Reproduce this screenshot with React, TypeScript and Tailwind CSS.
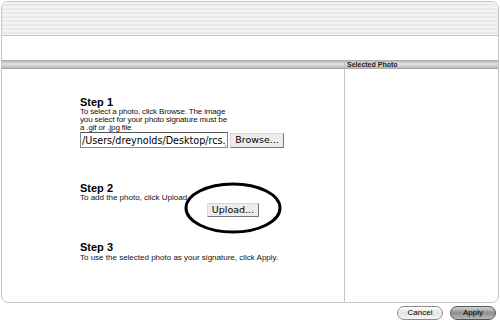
import React from 'react';

const stripes =
  'bg-[repeating-linear-gradient(to_bottom,#f3f3f3_0px,#f3f3f3_2px,#e9e9e9_2px,#e9e9e9_4px)]';

function Bar({ children, className = '' }: { children?: React.ReactNode; className?: string }) {
  return (
    <div
      className={`h-[9px] bg-[linear-gradient(to_bottom,#a9a9a9_0%,#c9c9c9_25%,#e4e4e4_45%,#cfcfcf_65%,#bdbdbd_85%,#9c9c9c_100%)] ${className}`}
    >
      {children}
    </div>
  );
}

function Title({ children }: { children: React.ReactNode }) {
  return <h3 className="text-[11px] leading-[12px] font-bold text-black">{children}</h3>;
}

const lucida = { fontFamily: '"DejaVu Sans", Verdana, sans-serif' };

export default function App() {
  return (
    <div
      className="relative w-[500px] h-[322px] bg-white overflow-hidden"
      style={{ fontFamily: '"Liberation Sans", Arial, sans-serif' }}
    >
      <div className="ml-[1px] mt-[1px] w-[498px] h-[302px] border border-[#c6c6c6] rounded-[7px] overflow-hidden flex flex-col">
        <div className={`h-[34px] border-b border-[#c4c4c4] ${stripes}`} />
        <div className="h-[24px] bg-white" />

        <div className="flex">
          <Bar className="flex-1" />
          <Bar className="w-[154px] border-l border-[#bdbdbd] flex items-center pl-[2px]">
            <span className="text-[7px] leading-[7px] font-bold text-[#222]">Selected Photo</span>
          </Bar>
        </div>

        <div className="flex flex-1">
          <div className="flex-1 pl-[78px] pt-[27px]">
            <Title>Step 1</Title>
            <p className="text-[8px] leading-[8px] text-[#111] whitespace-nowrap tracking-[-0.15px]">
              To select a photo, click Browse. The image
              <br />
              you select for your photo signature must be
              <br />
              a .gif or .jpg file
            </p>
            <div className="flex items-center gap-[2px]">
              <input
                readOnly
                value="/Users/dreynolds/Desktop/rcs.jpg"
                className="w-[148px] h-[16px] border border-[#8a8a8a] border-t-[#555] bg-white text-[9.6px] px-[1px] text-black outline-none"
                style={lucida}
              />
              <button
                className="w-[54px] h-[15px] bg-[#ededed] border border-[#d8d8d8] border-r-[#777] border-b-[#777] text-[9.5px] leading-[12px] text-black"
                style={lucida}
              >
                Browse...
              </button>
            </div>

            <div className="mt-[34px]">
              <Title>Step 2</Title>
              <p className="text-[8px] leading-[8px] text-[#111]">To add the photo, click Upload.</p>
            </div>
            <button
              className="block ml-[127px] mt-[1px] w-[52px] h-[14px] bg-[#ececec] border border-[#d8d8d8] border-r-[#777] border-b-[#777] text-[9.5px] leading-[12px] text-black"
              style={lucida}
            >
              Upload...
            </button>

            <div className="mt-[24px]">
              <Title>Step 3</Title>
              <p className="text-[8px] leading-[8px] text-[#111] mt-[1px]">
                To use the selected photo as your signature, click Apply.
              </p>
            </div>
          </div>
          <div className="w-[154px] border-l border-[#c6c6c6]" />
        </div>
      </div>

      <div className="flex justify-end gap-[7px] pr-[4px] mt-[3px]">
        <button className="w-[46px] h-[14px] rounded-full border border-[#8c8c8c] bg-[linear-gradient(to_bottom,#ffffff,#e4e4e4_50%,#f6f6f6)] text-[8px] leading-[12px] text-black">
          Cancel
        </button>
        <button className="w-[46px] h-[14px] rounded-full border border-[#555] bg-[linear-gradient(to_bottom,#d4d4d4,#8e8e8e_50%,#b8b8b8)] text-[8px] leading-[12px] text-black">
          Apply
        </button>
      </div>

      <svg className="absolute left-[184px] top-[182px]" width="98" height="52" viewBox="0 0 98 52">
        <ellipse cx="49" cy="26" rx="47" ry="24" fill="none" stroke="#000" strokeWidth="3" />
      </svg>
    </div>
  );
}
